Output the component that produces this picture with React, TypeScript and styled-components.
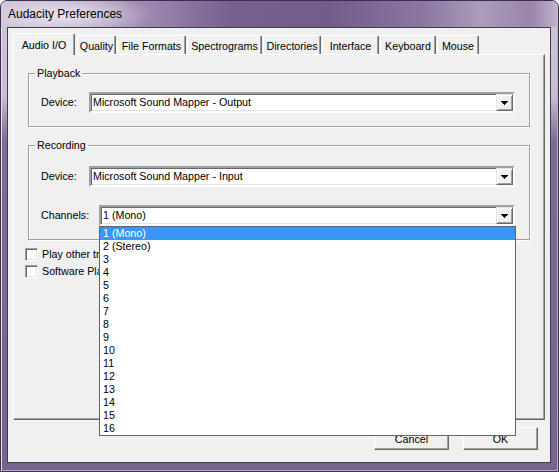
import React from "react";
import styled, { createGlobalStyle } from "styled-components";

const GlobalStyle = createGlobalStyle`
  html, body { margin: 0; padding: 0; background: #ffffff; }
  body {
    font-family: "Liberation Sans", Arial, sans-serif;
    font-size: 10.7px;
    color: #000000;
  }
  * { box-sizing: border-box; }
`;

const Window = styled.div`
  width: 559px;
  height: 472px;
  display: flex;
  flex-direction: column;
  border: 1px solid #3b2f4a;
  border-radius: 7px 7px 0 0;
  overflow: hidden;
  background: linear-gradient(
    to bottom,
    #cfc6da 0px,
    #c9bed5 95px,
    #7f6997 140px,
    #78628f 100%
  );
  box-shadow: inset 1px 1px 0 #e6dfec, inset -1px -1px 0 #b9aac8;
`;

const TitleBar = styled.div`
  height: 26px;
  flex: none;
  display: flex;
  align-items: center;
  padding-left: 7px;
  font-size: 12px;
  color: #000000;
  background:
    radial-gradient(ellipse 90px 22px at 62px 14px, rgba(236, 230, 240, 0.95), rgba(236, 230, 240, 0) 100%),
    linear-gradient(
      to right,
      #cbc1d5 0px,
      #c4b8d0 40px,
      #9a87ae 150px,
      #76608f 230px,
      #725c8b 330px,
      #8a77a1 420px,
      #aa9cbb 480px,
      #9886ab 530px,
      #c3b7cf 559px
    );
`;

const Client = styled.div`
  flex: 1;
  margin: 0 7px 8px 6px;
  border: 1px solid #45394f;
  background: #f0f0f0;
  display: flex;
  flex-direction: column;
`;

const TabStrip = styled.div`
  display: flex;
  align-items: flex-end;
  height: 26px;
  padding: 5px 0 0 7px;
`;

const Tab = styled.div<{ $w: number; $active?: boolean }>`
  position: relative;
  width: ${(p) => p.$w}px;
  height: ${(p) => (p.$active ? 22 : 19)}px;
  margin: ${(p) => (p.$active ? "0 2px -1px -2px" : "0 1px 0 0")};
  z-index: ${(p) => (p.$active ? 2 : 1)};
  padding-top: ${(p) => (p.$active ? 0 : 2)}px;
  display: flex;
  align-items: center;
  justify-content: center;
  background: #f0f0f0;
  border-top: 1px solid #ffffff;
  border-left: 1px solid #ffffff;
  border-right: 1px solid #696969;
  border-radius: 2px 2px 0 0;
  box-shadow: inset -1px 0 0 #a0a0a0;
  white-space: nowrap;
`;

const Panel = styled.div`
  position: relative;
  height: 366px;
  margin: 0 5px 0 5px;
  padding: 0 14px 0 14px;
  border-top: 1px solid #ffffff;
  border-left: 1px solid #ffffff;
  border-right: 1px solid #696969;
  border-bottom: 1px solid #696969;
  box-shadow: inset -1px -1px 0 #a0a0a0;
  display: flex;
  flex-direction: column;
`;

const Group = styled.div`
  margin-top: 18px;
  border: 1px solid #a0a0a0;
  box-shadow: inset 1px 1px 0 #ffffff, 1px 1px 0 #ffffff;
  padding: 0 14px 13px 12px;
  display: flex;
  flex-direction: column;
`;

const GroupTitle = styled.div`
  align-self: flex-start;
  margin: -7px 0 0 -6px;
  padding: 0 2px;
  height: 13px;
  line-height: 13px;
  background: #f0f0f0;
`;

const Row = styled.div<{ $top: number }>`
  display: flex;
  align-items: center;
  height: 21px;
  margin-top: ${(p) => p.$top}px;
`;

const Label = styled.div<{ $w: number }>`
  width: ${(p) => p.$w}px;
  flex: none;
  line-height: 13px;
`;

const ComboWrap = styled.div`
  position: relative;
  flex: 1;
  height: 21px;
`;

const Combo = styled.div`
  height: 21px;
  display: flex;
  align-items: center;
  background: #ffffff;
  border-style: solid;
  border-width: 2px;
  border-color: #a0a0a0 #ffffff #ffffff #a0a0a0;
  box-shadow: inset 1px 1px 0 #696969, inset -1px -1px 0 #e3e3e3;
`;

const ComboText = styled.div`
  flex: 1;
  padding-left: 2px;
  line-height: 13px;
  white-space: nowrap;
  overflow: hidden;
`;

const DropButton = styled.div`
  width: 17px;
  height: 17px;
  flex: none;
  display: flex;
  align-items: center;
  justify-content: center;
  background: #f0f0f0;
  border-style: solid;
  border-width: 1px;
  border-color: #e3e3e3 #696969 #696969 #e3e3e3;
  box-shadow: inset 1px 1px 0 #ffffff, inset -1px -1px 0 #a0a0a0;
`;

const DropList = styled.div`
  position: absolute;
  top: 100%;
  left: 0;
  width: calc(100% + 1px);
  z-index: 20;
  background: #ffffff;
  border: 1px solid #646464;
`;

const ListItem = styled.div<{ $sel?: boolean }>`
  height: 13px;
  line-height: 13px;
  padding-left: 3px;
  white-space: nowrap;
  background: ${(p) => (p.$sel ? "#3399ff" : "#ffffff")};
  color: ${(p) => (p.$sel ? "#ffffff" : "#000000")};
  outline: ${(p) => (p.$sel ? "1px dotted #c8701e" : "none")};
  outline-offset: -1px;
`;

const CheckRow = styled.div<{ $top: number }>`
  display: flex;
  align-items: center;
  height: 13px;
  margin-top: ${(p) => p.$top}px;
  padding-left: 11px;
  margin-left: -14px;
  white-space: nowrap;
  line-height: 13px;
`;

const CheckBox = styled.div`
  width: 13px;
  height: 13px;
  flex: none;
  margin-right: 4px;
  background: #ffffff;
  border-style: solid;
  border-width: 1px;
  border-color: #a0a0a0 #ffffff #ffffff #a0a0a0;
  box-shadow: inset 1px 1px 0 #696969, inset -1px -1px 0 #e3e3e3;
`;

const Footer = styled.div`
  display: flex;
  justify-content: flex-end;
  gap: 14px;
  padding: 7px 12px 0 0;
`;

const Button = styled.div`
  width: 75px;
  height: 23px;
  display: flex;
  align-items: center;
  justify-content: center;
  background: #f0f0f0;
  border-style: solid;
  border-width: 1px;
  border-color: #ffffff #696969 #696969 #ffffff;
  box-shadow: inset -1px -1px 0 #a0a0a0;
`;

const Arrow = () => (
  <svg width="7" height="4" viewBox="0 0 7 4" shapeRendering="crispEdges">
    <path d="M0 0h7v1h-1v1h-1v1h-1v1h-1v-1h-1v-1h-1v-1h-1z" fill="#000000" />
  </svg>
);

const ComboBox: React.FC<{ value: string; children?: React.ReactNode }> = ({ value, children }) => (
  <ComboWrap>
    <Combo>
      <ComboText>{value}</ComboText>
      <DropButton>
        <Arrow />
      </DropButton>
    </Combo>
    {children}
  </ComboWrap>
);

const tabs: { label: string; w: number; active?: boolean }[] = [
  { label: "Audio I/O", w: 62, active: true },
  { label: "Quality", w: 39 },
  { label: "File Formats", w: 69 },
  { label: "Spectrograms", w: 75 },
  { label: "Directories", w: 58 },
  { label: "Interface", w: 57 },
  { label: "Keyboard", w: 56 },
  { label: "Mouse", w: 42 },
];

const channels = [
  "1 (Mono)",
  "2 (Stereo)",
  "3",
  "4",
  "5",
  "6",
  "7",
  "8",
  "9",
  "10",
  "11",
  "12",
  "13",
  "14",
  "15",
  "16",
];

export default function App() {
  return (
    <>
      <GlobalStyle />
      <Window>
        <TitleBar>Audacity Preferences</TitleBar>
        <Client>
          <TabStrip>
            {tabs.map((t) => (
              <Tab key={t.label} $w={t.w} $active={t.active}>
                {t.label}
              </Tab>
            ))}
          </TabStrip>
          <Panel>
            <Group>
              <GroupTitle>Playback</GroupTitle>
              <Row $top={12}>
                <Label $w={48}>Device:</Label>
                <ComboBox value="Microsoft Sound Mapper - Output" />
              </Row>
            </Group>
            <Group>
              <GroupTitle>Recording</GroupTitle>
              <Row $top={14}>
                <Label $w={48}>Device:</Label>
                <ComboBox value="Microsoft Sound Mapper - Input" />
              </Row>
              <Row $top={18}>
                <Label $w={58}>Channels:</Label>
                <ComboBox value="1 (Mono)">
                  <DropList>
                    {channels.map((c, i) => (
                      <ListItem key={c} $sel={i === 0}>
                        {c}
                      </ListItem>
                    ))}
                  </DropList>
                </ComboBox>
              </Row>
            </Group>
            <CheckRow $top={8}>
              <CheckBox />
              Play other tracks while recording new one
            </CheckRow>
            <CheckRow $top={4}>
              <CheckBox />
              Software Playthrough (Play new track while recording it)
            </CheckRow>
          </Panel>
          <Footer>
            <Button>Cancel</Button>
            <Button>OK</Button>
          </Footer>
        </Client>
      </Window>
    </>
  );
}
